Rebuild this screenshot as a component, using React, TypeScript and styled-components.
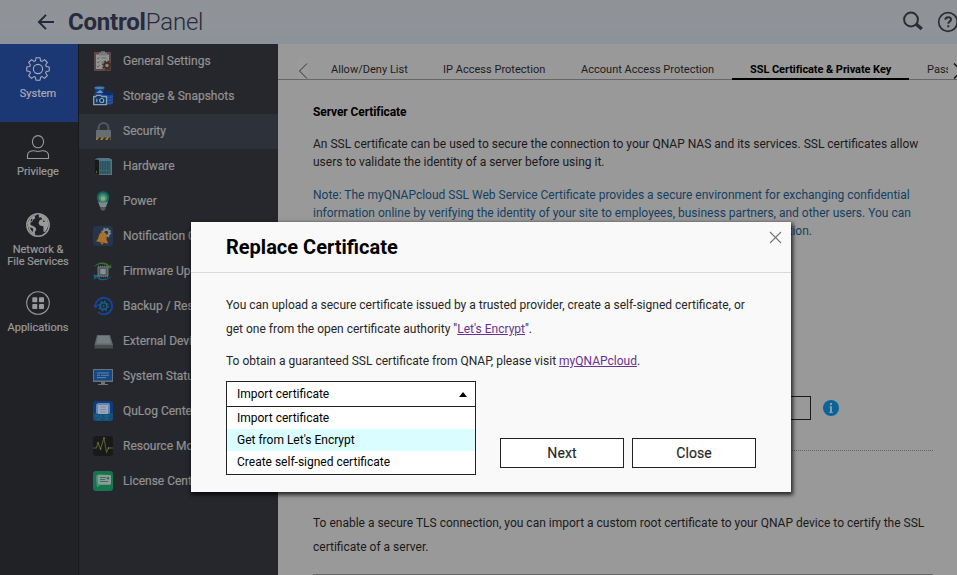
import React from "react";
import styled, { createGlobalStyle, css } from "styled-components";

const Global = createGlobalStyle`
  * { box-sizing: border-box; }
  html, body { margin: 0; padding: 0; overflow: hidden; }
  body {
    font-family: Roboto, "Liberation Sans", sans-serif;
    font-size: 12px;
    color: #161616;
  }
  svg { display: block; flex: none; }
`;

const Window = styled.div`
  position: relative;
  width: 957px;
  height: 575px;
  overflow: hidden;
  display: flex;
  flex-direction: column;
  background: #999;
`;

const Header = styled.header`
  height: 44px;
  flex: none;
  display: flex;
  align-items: center;
  padding-left: 37px;
  background: linear-gradient(#8f9398, #909398 60%, #8c929b);
`;

const Brand = styled.h1`
  margin: 0 0 0 13px;
  flex: 1;
  font-size: 24px;
  line-height: 44px;
  font-weight: 300;
  letter-spacing: -0.2px;
  color: #282a3d;
  b { font-weight: 700; letter-spacing: -0.2px; }
`;

const HeaderTools = styled.div`
  display: flex;
  align-items: center;
  gap: 13px;
  margin-right: -2px;
`;

const Body = styled.div`
  flex: 1;
  min-height: 0;
  display: flex;
`;

const Rail = styled.nav`
  width: 79px;
  flex: none;
  background: #212225;
  border-right: 1px solid #19191c;
`;

const RailItem = styled.div<{ $active?: boolean }>`
  height: 78px;
  padding: 13px 2px 0 0;
  display: flex;
  flex-direction: column;
  align-items: center;
  gap: 7px;
  color: ${(p) => (p.$active ? "#a8acb5" : "#9a9a9b")};
  background: ${(p) => (p.$active ? "#1c3874" : "transparent")};
`;

const RailLabel = styled.span`
  font-size: 11px;
  line-height: 12px;
  font-weight: 400;
  text-align: center;
  white-space: pre;
  -webkit-text-stroke: 0.2px currentColor;
`;

const Menu = styled.nav`
  width: 199px;
  flex: none;
  background: #26272c;
`;

const MenuItem = styled.div<{ $active?: boolean }>`
  height: 35px;
  display: flex;
  align-items: center;
  gap: 10px;
  padding: 0 0 2px 14px;
  font-size: 12px;
  font-weight: 400;
  -webkit-text-stroke: 0.2px currentColor;
  white-space: nowrap;
  color: #929293;
  ${(p) => p.$active && css`background: #2d313a;`}
`;

const Content = styled.main`
  flex: 1;
  min-width: 0;
  display: flex;
  flex-direction: column;
`;

const TabStrip = styled.div`
  height: 36px;
  flex: none;
  display: flex;
  align-items: flex-end;
  padding-left: 20px;
  border-bottom: 1px solid #666;
  white-space: nowrap;
`;

const ArrowBox = styled.span`
  width: 10px;
  height: 21px;
  flex: none;
  display: flex;
  align-items: flex-end;
  background: #9b9b9b;
`;

const TabList = styled.div`
  display: flex;
  width: 640px;
  overflow: hidden;
  margin-bottom: -1px;
  padding-left: 5px;
`;

const Tab = styled.span<{ $active?: boolean; $w: number }>`
  width: ${(p) => p.$w}px;
  flex: none;
  height: 22px;
  padding-left: 18px;
  font-size: 11px;
  line-height: 24px;
  letter-spacing: 0.02px;
  color: #1c1c1c;
  ${(p) =>
    p.$active &&
    css`
      color: #000;
      font-weight: 700;
      letter-spacing: -0.07px;
      border-bottom: 2px solid #000;
    `}
`;

const Section = styled.section`
  width: 620px;
  margin-left: 35px;
  line-height: 18px;
`;

const SectionTitle = styled.h2`
  margin: 23px 0 0;
  font-size: 12px;
  line-height: 18px;
  font-weight: 700;
  letter-spacing: -0.1px;
  color: #000;
`;

const Text = styled.p<{ $top: number; $note?: boolean; $tall?: boolean }>`
  margin: ${(p) => p.$top}px 0 0;
  white-space: nowrap;
  line-height: ${(p) => (p.$tall ? 24 : 18)}px;
  color: ${(p) => (p.$note ? "#143f5f" : "#1a1a1a")};
`;

const NoteTail = styled.span`
  display: block;
  width: 499px;
  text-align: right;
`;

const FieldRow = styled.div`
  display: flex;
  align-items: center;
  gap: 12px;
  margin-top: 156px;
  padding-bottom: 30px;
  border-bottom: 1px dotted #626262;
`;

const Field = styled.div`
  width: 498px;
  height: 24px;
  border: 1px solid #1a1a1a;
`;

const Divider = styled.div`
  height: 2px;
  margin-top: 15px;
  background: #666;
`;

const Dialog = styled.div`
  position: absolute;
  left: 191px;
  top: 222px;
  width: 600px;
  height: 270px;
  background: #f9f9f9;
  box-shadow: 1px 2px 4px 1px rgba(0, 0, 0, 0.75);
  color: #262626;
`;

const DialogHead = styled.div`
  height: 51px;
  display: flex;
  justify-content: space-between;
  padding: 0 9px 0 35px;
  border-bottom: 1px solid #d8d8d8;
`;

const DialogTitle = styled.h2`
  margin: 0;
  font-size: 20px;
  line-height: 50px;
  font-weight: 700;
  color: #000;
`;

const CloseMark = styled.span`
  padding-top: 9px;
`;

const DialogBody = styled.div`
  padding: 20px 35px 0;
  line-height: 24px;
  white-space: nowrap;
`;

const Para = styled.p`
  margin: 0 0 8px;
`;

const Link = styled.a`
  color: #69338f;
  text-decoration: underline;
`;

const Controls = styled.div`
  display: flex;
  align-items: flex-start;
`;

const Select = styled.div`
  width: 250px;
  border: 1px solid #222;
  background: #fff;
  color: #000;
`;

const SelectValue = styled.div`
  height: 25px;
  display: flex;
  align-items: center;
  justify-content: space-between;
  padding: 0 8px 0 10px;
  border-bottom: 1px solid #222;
`;

const Option = styled.div<{ $active?: boolean }>`
  height: 22px;
  line-height: 22px;
  padding-left: 10px;
  background: ${(p) => (p.$active ? "#dafdff" : "#fff")};
`;

const OptionList = styled.div`
  padding-bottom: 1px;
`;

const Button = styled.button`
  width: 124px;
  height: 30px;
  margin-top: 57px;
  padding: 0;
  background: #fff;
  border: 1px solid #222;
  font: 400 14px/28px Roboto, sans-serif;
  letter-spacing: 0.1px;
  -webkit-text-stroke: 0.15px currentColor;
  color: #262626;
`;

const Buttons = styled.div`
  display: flex;
  gap: 8px;
  margin-left: 24px;
`;

/* ---- rail icons ---- */

const gearPath = (() => {
  const pts: string[] = [];
  for (let i = 0; i < 8; i++) {
    const a = (i * Math.PI) / 4;
    const at = (r: number, d: number) =>
      `${(12 + r * Math.cos(a + d)).toFixed(2)},${(12 + r * Math.sin(a + d)).toFixed(2)}`;
    pts.push(at(8.6, -0.3), at(11.4, -0.18), at(11.4, 0.18), at(8.6, 0.3));
  }
  return "M" + pts.join("L") + "Z";
})();

const SystemIcon = () => (
  <svg width="24" height="24" viewBox="0 0 24 24" fill="none" stroke="currentColor" strokeWidth="1.1" strokeLinejoin="round">
    <path d={gearPath} />
    <circle cx="12" cy="12" r="4.6" />
  </svg>
);

const PrivilegeIcon = () => (
  <svg width="24" height="24" viewBox="0 0 24 24" fill="none" stroke="currentColor" strokeWidth="1.1" strokeLinejoin="round">
    <ellipse cx="12" cy="6.700" rx="5.600" ry="6.100" />
    <path d="M1.500 23.500v-3.200c0-2.500 2.200-4.200 5.200-4.600 1.800-.2 3.200.8 5.300.8s3.500-1 5.300-.8c3 .4 5.200 2.100 5.200 4.600v3.200z" />
  </svg>
);

const NetworkIcon = () => (
  <svg width="24" height="24" viewBox="0 0 24 24">
    <circle cx="12" cy="12" r="11.200" fill="none" stroke="currentColor" strokeWidth="1.500" />
    <path fill="currentColor" d="M10.700 1.400 8.600 3.600l.8 1.600-2.200 1.300-.8 1.900-2.100 1.300.3 2.300 2.500.9 2.400 1.500.8 2.400-1.600 2.200.6 3.400C5.600 21.400 2.600 17.500 1.900 13.100V9.800C3 5.400 6.600 2.200 10.700 1.400zM13.500 1.300c3.200.4 6.200 2.400 7.800 5.200l1.300 5.300-1.500 3.900-2.100 3.600-1.500-.7-.1-5.300-3.600-.8-1.300-2.500 1.300-3 2.700-.8-1.500-2-1.600.5-.8-1.600z" />
    <path fill="#212225" d="m5.300 5.700 1.300.9-1.200 1.800-.9-.4zM16.700 7.700l1.600-.3.600 1.300-1.400.4zM3.500 14.400l2.900.5 1 2.200-1 1.800z" />
  </svg>
);

const AppsIcon = () => (
  <svg width="24" height="24" viewBox="0 0 24 24">
    <circle cx="12" cy="12" r="11.300" fill="none" stroke="currentColor" strokeWidth="1.100" />
    <g fill="currentColor">
      <rect x="6.300" y="6.300" width="5" height="5" rx=".8" />
      <rect x="13" y="6.300" width="5" height="5" rx=".8" />
      <rect x="6.300" y="13" width="5" height="5" rx=".8" />
      <rect x="13" y="13" width="5" height="5" rx=".8" />
    </g>
  </svg>
);

/* ---- menu icons, all on a 20x20 grid ---- */

const I = ({ children }: { children: React.ReactNode }) => (
  <svg width="20" height="20" viewBox="0 0 20 20">{children}</svg>
);

const GeneralIcon = () => (
  <I>
    <rect x="1" y="1" width="17" height="19" rx=".8" fill="#5b4945" />
    <path d="M3 3.500h13V18H3z" fill="#929292" />
    <path d="M6 1.500h2V.2h4v1.300h2v3H6z" fill="#777b7c" />
    <path d="m4 7 1 1 1.500-2M4 11l1 1 1.500-2M4 15l1 1 1.500-2M8.500 7h5M8.500 11h3" stroke="#5d5d5d" strokeWidth=".8" fill="none" />
    <circle cx="14" cy="14.500" r="3.800" fill="#422d28" />
    <circle cx="14" cy="14.500" r="4.400" fill="none" stroke="#422d28" strokeWidth="1.500" strokeDasharray="1.730 1.730" />
    <circle cx="14" cy="14.500" r="1.700" fill="#8f8781" />
  </I>
);

const StorageIcon = () => (
  <I>
    <path d="M1 1.800C1 0 12 0 12 1.800L10.500 5 12 9H1l1.500-4z" fill="#173f88" />
    <ellipse cx="6.500" cy="1.800" rx="5" ry="1.400" fill="#4180ae" />
    <path d="m3 7 4-3 4 3z" fill="#7596b2" />
    <path d="M9 7.500C9 5.300 20 5.300 20 7.500V17c0 2.200-7 2.200-11 1z" fill="#19439a" />
    <ellipse cx="14.500" cy="7.400" rx="5.200" ry="1.700" fill="#102c70" />
    <path d="M12 11c3 1 6 .5 8-.5M13 14c3 .8 5.500.4 7-.5M13 17c3 .8 5.500.2 7-.8" fill="none" stroke="#3d5f9e" strokeWidth=".8" />
    <path d="M.7 10.500h2L3.700 9.300h4l1 1.200h4.800v8.200H.7z" fill="#0d3968" stroke="#8aa0b4" strokeWidth="1.300" strokeLinejoin="round" />
    <circle cx="8.700" cy="14.500" r="2" fill="#0b2545" stroke="#9aa7b3" strokeWidth="1.200" />
    <path d="M3.800 12.700v3.600" stroke="#8aa0b4" strokeWidth="1.200" />
  </I>
);

const SecurityIcon = () => (
  <I>
    <path d="M5.600 10V7a4.900 5 0 0 1 9.800 0v3" fill="none" stroke="#535862" strokeWidth="2" />
    <rect x="3" y="9" width="15" height="8" rx=".7" fill="#6a6c74" />
    <path d="M3 16.500h15V19H3z" fill="#99803a" />
    <path d="m6 16.500h2.500L7 19H4.500zM11 16.500h2.500L12 19H9.500zM16 16.500h2L17 19h-2.500z" fill="#302e2c" />
  </I>
);

const HardwareIcon = () => (
  <I>
    <path d="M2 3.500 4.500 2H16l3 1.500V19H5l-3-.8z" fill="#537683" />
    <path d="M2 3.700h4V19l-4-.8z" fill="#171a1a" />
    <path d="M6.500 5h11v13h-11z" fill="#28505f" />
    <path d="M8.500 5v13M11 5v13M13.500 5v13M16 5v13" stroke="#3e6d7e" strokeWidth=".7" />
    <path d="M7 14.500h10" stroke="#6d7a45" strokeWidth=".8" strokeDasharray="1.200 1.300" />
    <path d="M3.500 15v2" stroke="#586c22" />
  </I>
);

const PowerIcon = () => (
  <I>
    <circle cx="10" cy="6.500" r="6.200" fill="#16675b" />
    <circle cx="10" cy="7" r="4.300" fill="#438b78" />
    <circle cx="10" cy="7.500" r="2.300" fill="#90a779" />
    <path d="M5 10.500c3 1.300 7 1.300 10 0L13 16H7z" fill="#778e89" />
    <path d="M7.500 16h5v2.500L10 20l-2.500-1.500z" fill="#54595a" />
  </I>
);

const NotificationIcon = () => (
  <I>
    <rect width="20" height="20" rx="3" fill="#26344c" />
    <circle cx="13.200" cy="6.700" r="3" fill="none" stroke="#83878b" strokeWidth="2" />
    <circle cx="13.200" cy="6.700" r="4.400" fill="none" stroke="#83878b" strokeWidth="1.300" strokeDasharray="1.700 1.756" />
    <path d="M4 15c1.800-1.500 1.200-3.500 1.800-5.500C6.300 7.500 8 6 9.800 6c1.800.4 3.600 1.800 3.700 4 0 2-.2 4 1.800 5.300V17L4 16.200z" fill="#ad7028" transform="rotate(7 10 12)" />
    <circle cx="9" cy="17" r="1.500" fill="#99642a" />
  </I>
);

const FirmwareIcon = () => (
  <I>
    <path d="M1 6C4 1 12-.5 17 5L18.200 3V7.200H13.500L15.500 5.800C11.500 2 5.500 2.200 1 6z" fill="#36762a" />
    <path d="M19 14.500c-4 5.500-11 6.700-15.500 1.700L1.200 18.800.5 13.500l5.300.8-1.500 1.200c4 3.700 10 3.500 14.700-1z" fill="#16628c" />
    <rect x="5" y="5.500" width="10" height="10" fill="#566164" stroke="#6a777a" strokeWidth="1.500" strokeDasharray="1.200 .8" />
    <rect x="7" y="7.500" width="6" height="6" fill="#899092" stroke="#414c50" strokeWidth=".6" />
  </I>
);

const BackupIcon = () => (
  <I>
    <path d="M2.500 10a8.300 8.300 0 1 1 2.700 6.200" fill="none" stroke="#19429c" strokeWidth="1.800" />
    <path d="M0 9h5.200l-2.500 3.800z" fill="#19429c" />
    <circle cx="10.500" cy="10" r="3.300" fill="none" stroke="#0e6097" strokeWidth="1.600" />
    <circle cx="10.500" cy="10" r="4.700" fill="none" stroke="#0e6097" strokeWidth="1.500" strokeDasharray="1.700 1.990" />
    <circle cx="10.500" cy="10" r="1" fill="#0e6097" />
  </I>
);

const ExternalIcon = () => (
  <I>
    <path d="M4 4h13l3 10H1.500z" fill="#60686d" />
    <path d="M5 5h11l2 7.500H3.500z" fill="#737c81" />
    <path d="M1.500 14H20v3.500H1.500z" fill="#484d4d" />
    <path d="M3 16h3" stroke="#40632a" />
  </I>
);

const StatusIcon = () => (
  <I>
    <path d="M0 3h20v13H0z" fill="#68737b" />
    <path d="M1 4h18v10.500H1z" fill="#154984" />
    <path d="M4 7h12M4 9.300h3M8 9.300h8M4 11.600h9" stroke="#6c8cad" strokeWidth=".9" />
    <path d="M8 16h4v2h3v1H5v-1h3z" fill="#707474" />
  </I>
);

const QuLogIcon = () => (
  <I>
    <rect width="20" height="20" rx="3" fill="#123b7e" />
    <path d="M0 12h20v5a3 3 0 0 1-3 3H3a3 3 0 0 1-3-3z" fill="#155079" />
    <path d="M3 3.500 5 2h11l1 1.500v9H3z" fill="#6084ba" />
    <path d="M5 4h10v9H5z" fill="#9aa9b7" />
    <path d="M7 6h6M7 8.500h6M7 11h6" stroke="#7388a2" strokeWidth=".8" />
    <path d="M2 15h4M8 14v3M11 15h5M4 18h3M12 18h3" stroke="#287ca0" strokeWidth=".7" />
  </I>
);

const ResourceIcon = () => (
  <I>
    <rect width="20" height="20" rx="3" fill="#1b1918" />
    <path d="M0 12h3.300L5 7l2.500 6L11 2l2.500 14 2-4H20" fill="none" stroke="#4c6330" strokeWidth="1.100" />
    <path d="M5 7h.1M11 2h.1M15.500 12h.1M7.500 13h.1" stroke="#818a70" strokeWidth="1.500" strokeLinecap="round" />
  </I>
);

const LicenseIcon = () => (
  <I>
    <rect width="20" height="20" rx="3" fill="#14754f" />
    <path d="M3 7c0-3 1-3.500 4-3.500L17 4v10H7l-3 2.500z" fill="#4b927a" />
    <path d="M5 4h12a1 1 0 0 1 1 1v7.500a1 1 0 0 1-1 1H6.500L5 12z" fill="#909a95" />
    <path d="M7 6.500h6M7 8.500h5M7 10.500h8" stroke="#267057" strokeWidth=".9" />
    <circle cx="15" cy="7.300" r="1.300" fill="#267057" />
  </I>
);

const rail = [
  { label: "System", icon: SystemIcon },
  { label: "Privilege", icon: PrivilegeIcon },
  { label: "Network &\nFile Services", icon: NetworkIcon },
  { label: "Applications", icon: AppsIcon },
];

const menu = [
  { label: "General Settings", icon: GeneralIcon },
  { label: "Storage & Snapshots", icon: StorageIcon },
  { label: "Security", icon: SecurityIcon },
  { label: "Hardware", icon: HardwareIcon },
  { label: "Power", icon: PowerIcon },
  { label: "Notification Center", icon: NotificationIcon },
  { label: "Firmware Update", icon: FirmwareIcon },
  { label: "Backup / Restore", icon: BackupIcon },
  { label: "External Device", icon: ExternalIcon },
  { label: "System Status", icon: StatusIcon },
  { label: "QuLog Center", icon: QuLogIcon },
  { label: "Resource Monitor", icon: ResourceIcon },
  { label: "License Center", icon: LicenseIcon },
];

const tabs = [
  { label: "Allow/Deny List", w: 112 },
  { label: "IP Access Protection", w: 138 },
  { label: "Account Access Protection", w: 169 },
  { label: "SSL Certificate & Private Key", w: 177, active: true },
  { label: "Password", w: 120 },
];

export default function App() {
  return (
    <>
      <Global />
      <Window>
        <Header>
          <svg width="18" height="18" viewBox="0 0 18 18" fill="none" stroke="#242639" strokeWidth="1.900">
            <path d="M17 9H2M9 1.800 1.900 9 9 16.200" />
          </svg>
          <Brand><b>Control</b>Panel</Brand>
          <HeaderTools>
            <svg width="22" height="22" viewBox="0 0 22 22" fill="none" stroke="#2b2d31">
              <circle cx="9" cy="8.500" r="6.900" strokeWidth="2" />
              <path d="m14 13 5.800 5" strokeWidth="3.400" />
            </svg>
            <svg width="22" height="22" viewBox="0 0 22 22" fill="none" stroke="#2b2d31">
              <circle cx="11" cy="11" r="9.300" strokeWidth="1.700" />
              <path d="M8.400 8.700c0-3.500 5.600-3.300 5.600-.2 0 2-2.700 2.100-2.700 4.300M11.300 14.300v2" strokeWidth="2" />
            </svg>
          </HeaderTools>
        </Header>
        <Body>
          <Rail>
            {rail.map(({ label, icon: Icon }, i) => (
              <RailItem key={label} $active={i === 0}>
                <Icon />
                <RailLabel>{label}</RailLabel>
              </RailItem>
            ))}
          </Rail>
          <Menu>
            {menu.map(({ label, icon: Icon }) => (
              <MenuItem key={label} $active={label === "Security"}>
                <Icon />
                {label}
              </MenuItem>
            ))}
          </Menu>
          <Content>
            <TabStrip>
              <ArrowBox>
                <svg width="10" height="16" viewBox="0 0 10 16" fill="none" stroke="#333" strokeWidth="1">
                  <path d="M9 .5 1.500 8 9 15.500" />
                </svg>
              </ArrowBox>
              <TabList>
                {tabs.map((t) => (
                  <Tab key={t.label} $w={t.w} $active={t.active}>{t.label}</Tab>
                ))}
              </TabList>
              <svg width="9" height="16" viewBox="0 0 9 16" fill="none" stroke="#111" strokeWidth="1.300">
                <path d="M6 .5 13.500 8 6 15.500" />
              </svg>
            </TabStrip>
            <Section>
              <SectionTitle>Server Certificate</SectionTitle>
              <Text $top={14}>
                An SSL certificate can be used to secure the connection to your QNAP NAS and its services. SSL certificates allow
                <br />
                users to validate the identity of a server before using it.
              </Text>
              <Text $top={15} $note>
                Note: The myQNAPcloud SSL Web Service Certificate provides a secure environment for exchanging confidential
                <br />
                information online by verifying the identity of your site to employees, business partners, and other users. You can
                <NoteTail>information.</NoteTail>
              </Text>
              <FieldRow>
                <Field />
                <svg width="16" height="16" viewBox="0 0 16 16">
                  <circle cx="8" cy="8" r="8" fill="#08649a" />
                  <path d="M7 3h2v2H7zM6.500 6.200H9V12h.800v1H6.200v-1H7V7.200h-.5z" fill="#999" />
                </svg>
              </FieldRow>
              <Text $top={60} $tall>
                To enable a secure TLS connection, you can import a custom root certificate to your QNAP device to certify the SSL
                <br />
                certificate of a server.
              </Text>
              <Divider />
            </Section>
          </Content>
        </Body>
        <Dialog>
          <DialogHead>
            <DialogTitle>Replace Certificate</DialogTitle>
            <CloseMark>
              <svg width="13" height="13" viewBox="0 0 13 13" fill="none" stroke="#777" strokeWidth="1.100">
                <path d="m1 1 11 11M12 1 1 12" />
              </svg>
            </CloseMark>
          </DialogHead>
          <DialogBody>
            <Para>
              You can upload a secure certificate issued by a trusted provider, create a self-signed certificate, or
              <br />
              get one from the open certificate authority "<Link>Let's Encrypt</Link>".
            </Para>
            <Para>
              To obtain a guaranteed SSL certificate from QNAP, please visit <Link>myQNAPcloud</Link>.
            </Para>
            <Controls>
              <Select>
                <SelectValue>
                  Import certificate
                  <svg width="8" height="5" viewBox="0 0 8 5"><path d="M0 5 4 0l4 5z" fill="#000" /></svg>
                </SelectValue>
                <OptionList>
                  <Option>Import certificate</Option>
                  <Option $active>Get from Let's Encrypt</Option>
                  <Option>Create self-signed certificate</Option>
                </OptionList>
              </Select>
              <Buttons>
                <Button>Next</Button>
                <Button>Close</Button>
              </Buttons>
            </Controls>
          </DialogBody>
        </Dialog>
      </Window>
    </>
  );
}
